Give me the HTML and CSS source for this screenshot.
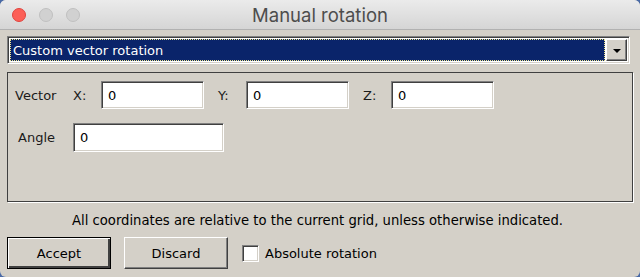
FILE: index.html
```html
<!DOCTYPE html>
<html>
<head>
<meta charset="utf-8">
<link rel="stylesheet" href="styles.css">
</head>
<body>
<div class="window">
  <div class="titlebar">
    <div class="lights">
      <span class="light red"></span>
      <span class="light"></span>
      <span class="light"></span>
    </div>
    <div class="title">Manual rotation</div>
  </div>
  <div class="content">
    <div class="select">
      <div class="select-value"><span>Custom vector rotation</span></div>
      <div class="select-btn"><span class="arrow"></span></div>
    </div>
    <div class="panel">
      <div class="row">
        <span class="lbl vector">Vector</span>
        <span class="lbl axis">X:</span>
        <div class="field">0</div>
        <span class="lbl axis sp">Y:</span>
        <div class="field">0</div>
        <span class="lbl axis sp">Z:</span>
        <div class="field">0</div>
      </div>
      <div class="row angle-row">
        <span class="lbl angle">Angle</span>
        <div class="field wide">0</div>
      </div>
    </div>
    <div class="note">All coordinates are relative to the current grid, unless otherwise indicated.</div>
    <div class="actions">
      <button class="btn default">Accept</button>
      <button class="btn">Discard</button>
      <label class="check"><span class="box"></span>Absolute rotation</label>
    </div>
  </div>
</div>
</body>
</html>
```

FILE: styles.css
```css
* { box-sizing: border-box; }
html, body { margin: 0; padding: 0; }
body {
  width: 640px;
  height: 277px;
  background: #4a6aa6;
  font-family: "DejaVu Sans", Verdana, sans-serif;
  font-size: 13px;
  color: #000;
  overflow: hidden;
}
.window {
  width: 640px;
  height: 277px;
  background: #d4d0c8;
  border-radius: 6px;
  overflow: hidden;
}
.titlebar {
  height: 30px;
  background: linear-gradient(#ebebeb, #d5d5d5);
  border-bottom: 1px solid #b1b1b1;
  display: flex;
  align-items: center;
  justify-content: center;
  position: relative;
}
.lights {
  position: absolute;
  left: 12px;
  top: 8px;
  display: flex;
  gap: 13px;
}
.light {
  width: 14px;
  height: 14px;
  border-radius: 50%;
  background: #d1d1d1;
  border: 1px solid #c0c0c0;
}
.light.red {
  background: #fc5f57;
  border-color: #e0443e;
}
.title {
  font-size: 18.5px;
  color: #4d4d4d;
  font-family: Inter, "Liberation Sans", sans-serif;
}
.content {
  padding: 6px 7px 0 7px;
}
.select {
  height: 28px;
  width: 623px;
  display: flex;
  border-top: 1px solid #808080;
  border-left: 1px solid #808080;
  border-right: 1px solid #fff;
  border-bottom: 1px solid #fff;
  box-shadow: inset 1px 1px 0 #404040, inset -1px -1px 0 #d4d0c8;
  padding: 2px;
  background: #fff;
}
.select-value {
  flex: 1;
  background: #0a246a;
  outline: 1px dotted #f0e68c;
  outline-offset: -1px;
  color: #fff;
  display: flex;
  align-items: center;
  padding-left: 3px;
  margin-right: 1px;
}
.select-btn {
  width: 21px;
  background: #d4d0c8;
  border-top: 1px solid #fff;
  border-left: 1px solid #fff;
  border-right: 1px solid #404040;
  border-bottom: 1px solid #404040;
  box-shadow: inset -1px -1px 0 #808080;
  display: flex;
  align-items: center;
  justify-content: center;
}
.arrow {
  width: 0;
  height: 0;
  border-left: 4px solid transparent;
  border-right: 4px solid transparent;
  border-top: 4px solid #000;
  margin-top: 1px;
}
.panel {
  margin-top: 8px;
  height: 130px;
  width: 626px;
  border: 1px solid #404040;
  box-shadow: 1px 1px 0 #fff;
  padding: 8px 0 0 7px;
}
.row {
  display: flex;
  align-items: center;
}
.lbl { color: #1a1a1a; }
.vector { width: 58px; }
.axis { width: 28px; }
.sp { margin-left: 14px; }
.field {
  width: 103px;
  height: 28px;
  background: #fff;
  border-top: 1px solid #808080;
  border-left: 1px solid #808080;
  border-right: 1px solid #fff;
  border-bottom: 1px solid #fff;
  box-shadow: inset 1px 1px 0 #404040, inset -1px -1px 0 #d4d0c8;
  display: flex;
  align-items: center;
  padding-left: 6px;
}
.angle-row { margin-top: 14px; }
.angle { width: 55px; margin-left: 3px; }
.field.wide { width: 151px; height: 29px; }
.note {
  text-align: center;
  margin-top: 11px;
  height: 16px;
  line-height: 16px;
  padding-right: 5px;
  font-size: 13.2px;
}
.actions {
  margin-top: 8px;
  display: flex;
  align-items: center;
}
.btn {
  font-family: "DejaVu Sans", Verdana, sans-serif;
  font-size: 13px;
  color: #000;
  height: 32px;
  width: 104px;
  background: #d4d0c8;
  border-top: 1px solid #fff;
  border-left: 1px solid #fff;
  border-right: 1px solid #404040;
  border-bottom: 1px solid #404040;
  box-shadow: inset -1px -1px 0 #808080;
  padding: 0;
  margin-right: 13px;
}
.btn.default {
  border: 1px solid #000;
  box-shadow: inset 1px 1px 0 #fff, inset -2px -2px 0 #404040;
  width: 104px;
}
.check {
  display: flex;
  align-items: center;
  gap: 6px;
  margin-left: 1px;
}
.box {
  width: 17px;
  height: 17px;
  background: #fff;
  border-top: 1px solid #808080;
  border-left: 1px solid #808080;
  border-right: 1px solid #fff;
  border-bottom: 1px solid #fff;
  box-shadow: inset 1px 1px 0 #404040, inset -1px -1px 0 #d4d0c8;
}
```
